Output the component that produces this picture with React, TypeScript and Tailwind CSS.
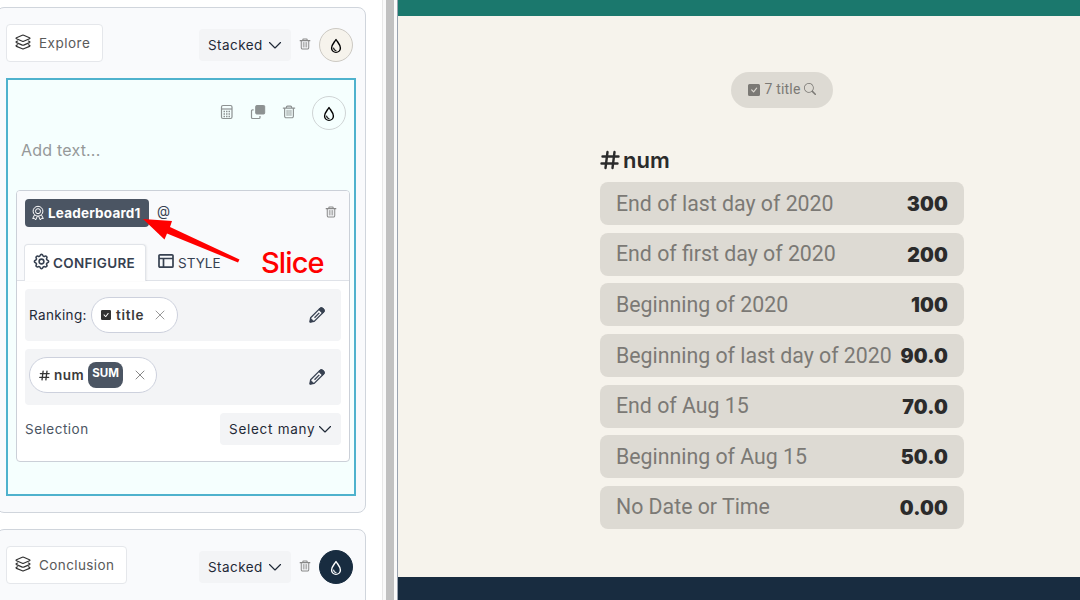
import type { ReactNode } from "react";
import { BsCheckSquareFill, BsSearch } from "react-icons/bs";
import { HiOutlineCog } from "react-icons/hi";

const Trash = ({ className }: { className: string }) => (
  <svg viewBox="0 0 16 16" fill="none" stroke="currentColor" className={className}>
    <path d="M1.5 3.500h13M5 3.400V2.500a1.200 1.200 0 0 1 1.200-1.200h3.600A1.200 1.200 0 0 1 11 2.500v.9M3 3.600v9.200a1.800 1.800 0 0 0 1.800 1.800h6.400a1.800 1.800 0 0 0 1.800-1.800V3.600" strokeWidth="1.350" strokeLinecap="round" />
    <path d="M5.800 6v6M8 6v6M10.200 6v6" strokeWidth="1" strokeLinecap="round" />
  </svg>
);

const Layers = () => (
  <svg viewBox="0 0 16 16" fill="none" stroke="currentColor" strokeWidth="1.200" strokeLinejoin="round" strokeLinecap="round" className="-mt-[2px] size-4 shrink-0 text-[#333]">
    <path d="M7.300 1.300 1.500 3.700q-1 .6 0 1.100l5.800 2.500q.7.300 1.400 0l5.800-2.500q1-.6 0-1.100L8.700 1.300Q8 1 7.300 1.300Z" />
    <path d="m2.600 7-1.100.5q-1 .5 0 1.100l5.800 2.500q.7.300 1.400 0l5.800-2.500q1-.6 0-1.100L13.400 7" />
    <path d="m2.600 10.800-1.100.5q-1 .5 0 1.100l5.800 2.400q.7.300 1.400 0l5.800-2.400q1-.6 0-1.100l-1.100-.5" />
  </svg>
);

const Drop = () => (
  <svg viewBox="0 0 16 16" fill="none" stroke="currentColor" className="mt-px h-4 w-4">
    <path d="M8 1.500C6.400 4.200 3.600 6.700 3.600 10a4.400 4.400 0 0 0 8.800 0C12.400 6.700 9.600 4.200 8 1.500Z" strokeWidth="1.400" strokeLinejoin="round" />
    <path d="M5.700 10.200c.1 1.300.9 2.100 2.200 2.300" strokeWidth="1.200" strokeLinecap="round" />
  </svg>
);

const Chevron = () => (
  <svg viewBox="0 0 14 14" fill="none" stroke="currentColor" strokeWidth="1.150" strokeLinecap="round" strokeLinejoin="round" className="size-3.5 shrink-0">
    <path d="m1.500 4.500 5.500 5.500 5.500-5.500" />
  </svg>
);

const Award = () => (
  <svg viewBox="0 0 14 16" fill="none" stroke="currentColor" strokeWidth="1" strokeLinejoin="round" className="mr-[3px] h-4 w-3.5 shrink-0">
    <circle cx="7" cy="6.200" r="4.900" />
    <circle cx="7" cy="6.200" r="2.500" />
    <path d="m3.500 10-1.800 3.500 1.900-.2 1 1.700L6.400 11.200M10.500 10l1.800 3.500-1.900-.2-1 1.700L7.600 11.200" />
  </svg>
);

const Close = ({ className }: { className: string }) => (
  <svg viewBox="0 0 10 10" fill="none" stroke="currentColor" strokeWidth="1" strokeLinecap="round" className={className}>
    <path d="m1 1 8 8M9 1 1 9" />
  </svg>
);

const Pencil = () => (
  <svg viewBox="0 0 16 16" fill="none" stroke="currentColor" className="size-4 text-[#374151]">
    <path d="M1 15 1.600 10.800 11 1.400q1.300-1 2.800.4l.5.500q1.300 1.400.3 2.700L5.200 14.400Z" strokeWidth="1.300" strokeLinejoin="round" />
    <path d="m9.800 2.500 1.800-1.600q1.300-.6 2.800.7 1.300 1.400.8 2.800L13.500 6.200Z" fill="currentColor" />
    <path d="m1 15 .7-3.600 2.900 2.900Z" fill="currentColor" />
    <path d="m5.500 10.700 4.800-4.800" strokeWidth="1.300" />
  </svg>
);

const Calculator = () => (
  <svg viewBox="0 0 14 16" fill="none" stroke="currentColor" className="h-4 w-3.5">
    <rect x="1.500" y="1.500" width="10.500" height="13" rx="1.500" strokeWidth="1.200" />
    <path d="M1.500 5h10.500" strokeWidth="1.200" />
    <path d="M3.500 7.500h1.500m1 0h1.500m1 0h1.500M3.500 10h1.500m1 0h1.500m1 0h1.500M3.500 12.500h1.500m1 0h1.500m1 0h1.500" strokeWidth="1.600" />
  </svg>
);

const Copy = () => (
  <svg viewBox="0 0 16 16" fill="none" stroke="currentColor" className="size-4">
    <rect x="5.700" y="1.500" width="9" height="8.500" rx="1" fill="currentColor" />
    <path d="M3.600 5.800H2.500a1 1 0 0 0-1 1V13.500a1 1 0 0 0 1 1H9a1 1 0 0 0 1-1V12" strokeWidth="1.200" />
  </svg>
);

const Hash = ({ className }: { className: string }) => (
  <svg viewBox="0 0 20 20" fill="none" stroke="currentColor" strokeWidth="2.400" strokeLinecap="round" className={className}>
    <path d="M7.500 2 5.500 18M14.500 2l-2 16M2.500 6.500h16M1.500 13.500h16" />
  </svg>
);

const Layout = () => (
  <svg viewBox="0 0 16 16" fill="none" stroke="currentColor" strokeWidth="1.700" className="-mt-[3px] size-4">
    <rect x="1" y="1.800" width="14" height="12.400" rx="1" />
    <path d="M1 5.500h14M5.500 5.500V14" />
  </svg>
);

const Select = ({ children, className }: { children: ReactNode; className: string }) => (
  <button className={`flex h-8 items-center justify-between rounded bg-[#f3f4f6] pr-[9px] pl-[9px] text-[13.500px] whitespace-nowrap text-[#1f2937] ${className}`}>
    {children}
    <Chevron />
  </button>
);

function BlockHeader({ name, nameClass, circleClass }: { name: string; nameClass: string; circleClass: string }) {
  return (
    <div className="flex h-[38px] items-start">
      <button className={`flex h-[38px] items-center gap-2 rounded border border-[#e5e7eb] bg-white pl-2 text-[13.500px] text-[#5a5a5a] ${nameClass}`}>
        <Layers />
        <span>{name}</span>
      </button>
      <div className="ml-auto flex items-center pt-1">
        <Select className="w-[92px] tracking-[0.450px]">Stacked</Select>
        <Trash className="-mt-[2px] mr-[8px] ml-[8px] size-3 text-[#888]" />
        <div className={`flex size-[34px] items-center justify-center rounded-full border ${circleClass}`}><Drop /></div>
      </div>
    </div>
  );
}

const rows = [
  ["End of last day of 2020", "300"],
  ["End of first day of 2020", "200"],
  ["Beginning of 2020", "100"],
  ["Beginning of last day of 2020", "90.0"],
  ["End of Aug 15", "70.0"],
  ["Beginning of Aug 15", "50.0"],
  ["No Date or Time", "0.00"],
];

function Leaderboard() {
  return (
    <div className="mt-[28px] ml-2 h-[272px] w-[334px] overflow-hidden rounded border border-[#cbd0d8] bg-white">
      <div className="h-[90px] border-b border-[#dfe2e8] bg-[#f9fafc]">
        <div className="flex items-center pt-2 pl-2">
          <div className="flex h-7 w-[124px] items-center rounded bg-[#4b5563] pl-1.5 text-[13.500px] font-bold text-white">
            <Award />
            <span className="tracking-[0.200px]">Leaderboard1</span>
          </div>
          <span className="-mt-[3px] ml-2 text-[13.500px] text-[#374151]">@</span>
          <Trash className="-mt-[2px] mr-3 ml-auto size-3 text-[#888]" />
        </div>
        <div className="mt-[17px] flex h-[37px] pl-2 text-[#374151]">
          <div className="-ml-px flex h-[37px] w-[122px] items-center rounded-t border border-b-0 border-[#e1e4e9] bg-white pl-[7px] shadow-[1px_0_2px_rgba(0,0,0,0.060)]">
            <HiOutlineCog className="-mt-1 mr-[2px] size-[19px]" />
            <span className="text-[13.500px] font-semibold tracking-[0.300px]">CONFIGURE</span>
          </div>
          <div className="flex items-center pl-3">
            <Layout />
            <span className="mt-px ml-1 text-[13.500px]">STYLE</span>
          </div>
        </div>
      </div>
      <div className="px-2 pt-2 text-[13.500px]">
        <div className="flex h-[52px] items-center rounded bg-[#f3f4f6] pr-4 pl-1 text-[#1f2937]">
          <span className="w-[62px] tracking-[0.350px]">Ranking:</span>
          <div className="flex h-9 w-[87px] items-center rounded-full border border-[#cdd1dd] bg-white pl-[9px]">
            <BsCheckSquareFill className="size-2.5 text-[#333]" />
            <span className="ml-[5px] font-semibold tracking-[0.700px] text-[#3a3a3a]">title</span>
            <Close className="mr-3 ml-auto size-[10px] text-[#999]" />
          </div>
          <span className="ml-auto"><Pencil /></span>
        </div>
        <div className="mt-2 flex h-[56px] items-center rounded bg-[#f3f4f6] pr-4 pl-1">
          <div className="-mt-1 flex h-9 w-[128px] items-center rounded-full border border-[#cdd1dd] bg-white pl-[9px] text-[#333]">
            <Hash className="size-[11px]" />
            <span className="ml-1 font-semibold tracking-[0.500px] text-[#3a3a3a]">num</span>
            <span className="ml-1 flex h-[26px] w-[35px] items-center justify-center rounded-lg bg-[#4b5563] pb-[2px] text-[11.500px] font-bold text-white">SUM</span>
            <Close className="mr-[11px] ml-auto size-[10px] text-[#888]" />
          </div>
          <span className="ml-auto"><Pencil /></span>
        </div>
        <div className="mt-2 flex items-center justify-between">
          <span className="tracking-[0.500px] text-[#4b5563]">Selection</span>
          <Select className="w-[121px] tracking-[0.720px]">Select many</Select>
        </div>
      </div>
    </div>
  );
}

export default function App() {
  return (
    <div className="relative flex h-[600px] w-[1080px] overflow-hidden bg-white font-['Inter',sans-serif]">
      <div className="h-full w-[382px] shrink-0 overflow-hidden pt-[7px]">
        <section className="-ml-1 h-[506px] w-[370px] rounded-lg border border-[#d0d5dc] bg-[#f9fafc] pt-4 pr-3 pl-[9px]">
          <BlockHeader name="Explore" nameClass="w-[97px] tracking-[0.500px]" circleClass="bg-[#f6f3ec] border-[#ccc9c3] text-black" />
          <div className="mt-4 h-[418px] w-[350px] border-2 border-[#4fb2cd] bg-[#f5fffe]">
            <div className="flex items-center justify-end pt-4 pr-2 text-[#8d9292]">
              <div className="-mt-[2px] flex items-center">
                <Calculator />
                <span className="ml-4"><Copy /></span>
                <Trash className="mr-4 ml-4 size-3.5" />
              </div>
              <div className="flex size-[34px] items-center justify-center rounded-full border border-[#cfd4d5] text-black"><Drop /></div>
            </div>
            <div className="mt-[8px] ml-[13px] h-6 text-[16px] leading-6 tracking-[0.200px] text-[#969999]">Add text...</div>
            <Leaderboard />
          </div>
        </section>
        <section className="mt-4 -ml-1 h-[100px] w-[370px] rounded-lg border border-[#d0d5dc] bg-[#f9fafc] pt-4 pr-3 pl-[9px]">
          <BlockHeader name="Conclusion" nameClass="w-[121px] tracking-[0.400px]" circleClass="bg-[#182c40] border-[#182c40] text-white" />
        </section>
      </div>
      <div className="h-full w-4 shrink-0 border-r border-l border-r-[#9aa3b0] border-l-[#e8e8e8] bg-[#fafafa] pl-[3px]">
        <div className="h-full w-2 bg-[#c1c1c1]" />
      </div>
      <main className="flex h-full flex-1 flex-col bg-[#f6f3ec]">
        <div className="h-4 shrink-0 bg-[#1b786d]" />
        <div className="h-[561px] shrink-0 pl-[202px]">
          <div className="mt-14 ml-[131px] flex h-9 w-[102px] items-center justify-center rounded-full bg-[#dddad3] font-['Roboto',sans-serif] text-[14px] text-[#7b7975]">
            <BsCheckSquareFill className="size-3" />
            <span className="mr-[3px] mb-px ml-1 tracking-[0.200px]">7 title</span>
            <BsSearch className="mb-[2px] size-3" />
          </div>
          <div className="mt-[34px] mb-1 flex h-[36px] items-center text-[22px] font-semibold text-[#2b2b2b]">
            <Hash className="-mt-px size-[20px]" />
            <span className="ml-[3px]">num</span>
          </div>
          <div className="flex w-[364px] flex-col gap-[7.670px]">
            {rows.map(([label, value]) => (
              <div key={label} className="flex h-[43px] items-center justify-between rounded-lg bg-[#dddad3] px-4 whitespace-nowrap">
                <span className="font-['Roboto',sans-serif] text-[21.300px] text-[#7b7975]">{label}</span>
                <span className="mt-[2px] text-[19.500px] font-black tracking-[0.150px] text-[#2b2b2b]">{value}</span>
              </div>
            ))}
          </div>
        </div>
        <div className="flex-1 bg-[#182c40]" />
      </main>
      <svg className="absolute top-[215px] left-[140px] h-[52px] w-[104px]" viewBox="140 215 104 52" fill="#f00">
        <path d="M143 219 172 221 170 227 239.500 259.500 238 262.500 167 233.500 164.500 239.500Z" />
      </svg>
      <span className="absolute top-[242px] left-[261px] text-[29px] leading-[42px] font-medium tracking-[-0.900px] text-[#f00]">Slice</span>
    </div>
  );
}
